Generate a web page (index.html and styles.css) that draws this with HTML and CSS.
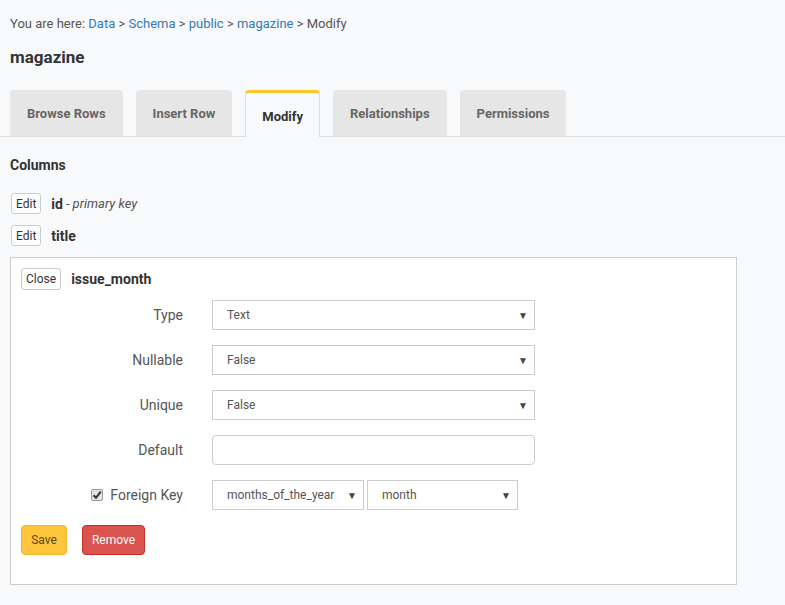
FILE: index.html
```html
<!DOCTYPE html>
<html>
<head>
<meta charset="utf-8">
<link rel="stylesheet" href="styles.css">
</head>
<body>
<div class="page">
  <div class="crumbs">You are here: <a>Data</a> &gt; <a>Schema</a> &gt; <a>public</a> &gt; <a>magazine</a> &gt; Modify</div>
  <h1 class="title">magazine</h1>
  <div class="tabs">
    <div class="tab">Browse Rows</div>
    <div class="tab">Insert Row</div>
    <div class="tab active">Modify</div>
    <div class="tab">Relationships</div>
    <div class="tab">Permissions</div>
  </div>
  <div class="content">
    <h2 class="section">Columns</h2>
    <div class="col-row"><span class="btn-sm">Edit</span><b>id</b><i class="meta"> - primary key</i></div>
    <div class="col-row"><span class="btn-sm">Edit</span><b>title</b></div>
    <div class="panel">
      <div class="panel-head"><span class="btn-sm">Close</span><b>issue_month</b></div>
      <div class="form">
        <div class="label">Type</div>
        <div class="select"><span>Text</span><span class="arrow">▼</span></div>
        <div class="label">Nullable</div>
        <div class="select"><span>False</span><span class="arrow">▼</span></div>
        <div class="label">Unique</div>
        <div class="select"><span>False</span><span class="arrow">▼</span></div>
        <div class="label">Default</div>
        <div class="input"></div>
        <div class="label"><span class="check"><svg width="12" height="12" viewBox="0 0 12 12"><rect x="0.5" y="0.5" width="11" height="11" rx="1.5" fill="#e4e4e4" stroke="#9a9a9a"/><path d="M2.5 6.2 L5 8.8 L9.8 2.6" fill="none" stroke="#333" stroke-width="2"/></svg></span>Foreign Key</div>
        <div class="fk">
          <div class="select s1"><span>months_of_the_year</span><span class="arrow">▼</span></div>
          <div class="select s2"><span>month</span><span class="arrow">▼</span></div>
        </div>
      </div>
      <div class="actions">
        <span class="btn save">Save</span>
        <span class="btn remove">Remove</span>
      </div>
    </div>
  </div>
</div>
</body>
</html>
```
FILE: styles.css
```css
* { box-sizing: border-box; }
html, body { margin: 0; padding: 0; }
body {
  background: #f8f9fa;
  font-family: Roboto, "Liberation Sans", sans-serif;
  color: #333;
  width: 785px;
  height: 605px;
  overflow: hidden;
}
.page { padding-top: 14px; }
.crumbs {
  padding-left: 10px;
  font-size: 13px;
  line-height: 20px;
  color: #555;
}
.crumbs a { color: #337ab7; }
.title {
  margin: 10px 0 0 10px;
  font-size: 17px;
  line-height: 26px;
  font-weight: bold;
  color: #333;
}
.tabs {
  margin-top: 20px;
  display: flex;
  gap: 13px;
  padding-left: 10px;
  border-bottom: 1px solid #ddd;
  height: 47px;
}
.tab {
  height: 46px;
  padding: 1px 17px 0;
  display: flex;
  align-items: center;
  background: #e6e6e6;
  border-radius: 4px 4px 0 0;
  font-size: 13px;
  font-weight: bold;
  color: #666;
}
.tab.active {
  background: #f8f9fa;
  border: 1px solid #ddd;
  border-top: 3px solid #ffc627;
  border-bottom: none;
  height: 47px;
  color: #333;
  padding: 2px 16px 0;
}
.content { padding: 19px 10px 0 10px; }
.section {
  margin: 0;
  font-size: 14px;
  line-height: 18px;
  font-weight: bold;
  color: #333;
}
.col-row {
  display: flex;
  align-items: center;
  gap: 10px;
  font-size: 14px;
  height: 21px;
}
.col-row + .col-row { margin-top: 11px; }
.section + .col-row { margin-top: 19px; }
.meta { color: #555; font-size: 13px; margin-left: -7px; }
.btn-sm {
  display: inline-flex;
  align-items: center;
  justify-content: center;
  height: 21px;
  padding: 0 4px;
  margin-left: 1px;
  background: #fff;
  border: 1px solid #ccc;
  border-radius: 3px;
  font-size: 12px;
  font-weight: normal;
  color: #333;
}
.panel {
  margin-top: 11px;
  width: 727px;
  height: 328px;
  background: #fff;
  border: 1px solid #ccc;
  padding: 10px;
}
.panel-head {
  display: flex;
  align-items: center;
  gap: 10px;
  font-size: 14px;
  height: 22px;
}
.panel-head .btn-sm { height: 22px; margin-left: 0; }
.form {
  margin-top: 10px;
  display: grid;
  grid-template-columns: 162px 323px;
  column-gap: 29px;
  row-gap: 15px;
}
.label {
  height: 30px;
  display: flex;
  align-items: center;
  justify-content: flex-end;
  font-size: 14px;
  color: #555;
}
.check { display: inline-flex; margin-right: 7px; }
.select {
  height: 30px;
  border: 1px solid #ccc;
  background: #fff;
  display: flex;
  align-items: center;
  justify-content: space-between;
  padding: 0 6px 0 14px;
  font-size: 12px;
  color: #555;
}
.arrow { font-size: 10px; color: #444; }
.input {
  height: 30px;
  border: 1px solid #ccc;
  border-radius: 4px;
  background: #fff;
}
.fk { display: flex; gap: 3px; }
.fk .s1 { width: 152px; }
.fk .s2 { width: 151px; }
.actions {
  margin-top: 15px;
  display: flex;
  gap: 15px;
}
.btn {
  height: 30px;
  display: inline-flex;
  align-items: center;
  justify-content: center;
  border-radius: 4px;
  font-size: 12px;
}
.save { width: 46px; background: #ffc53d; color: #5a4a1a; border: 1px solid #f0b92d; }
.remove { width: 63px; background: #d9534f; color: #fff; border: 1px solid #c9302c; }
```
